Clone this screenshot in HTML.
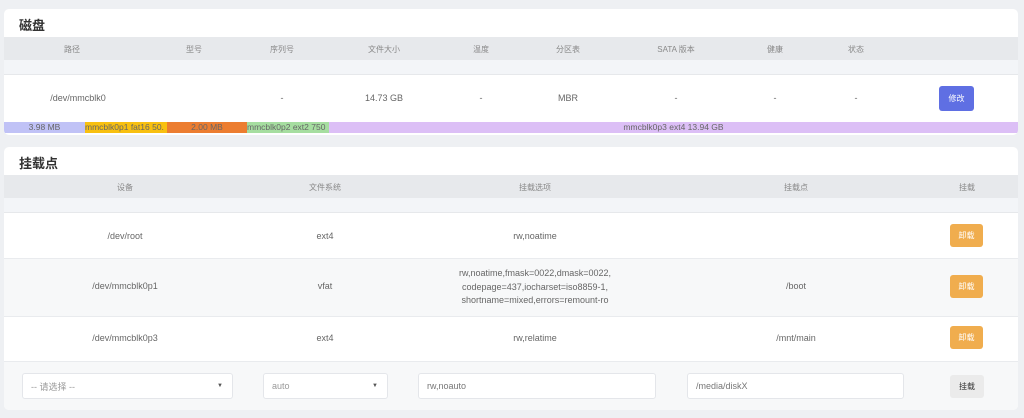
<!DOCTYPE html>
<html><head><meta charset="utf-8"><style>
*{margin:0;padding:0;box-sizing:border-box}
body{width:1024px;height:418px;background:#eef0f3;font-family:"Liberation Sans","Noto Sans CJK SC",sans-serif;color:#666;font-size:9px;position:relative;overflow:hidden}
.a{position:absolute}
.card{position:absolute;left:4px;width:1014px;background:#fff;border-radius:5px;overflow:hidden}
.t{position:absolute;transform:translateX(-50%);white-space:nowrap}
.h{color:#888;font-size:8px}
.title{position:absolute;left:15px;font-size:13px;font-weight:bold;color:#333}
.btn{position:absolute;border-radius:3px;color:#fff;font-size:8px;display:flex;align-items:center;justify-content:center}
.inp{position:absolute;background:#fff;border:1px solid #e4e6ea;border-radius:3px;height:26px;font-size:9px;color:#999;padding-left:8px;display:flex;align-items:center}
.seg{position:absolute;top:113px;height:11px;font-size:8.5px;line-height:11px;overflow:hidden;white-space:nowrap}
</style></head><body>
<div class="card" style="top:9px;height:126px">
 <div class="title" style="top:6px">磁盘</div>
 <div class="a" style="top:28px;left:0;width:100%;height:23px;background:#e7e9ec"></div>
 <div class="a" style="top:51px;left:0;width:100%;height:15px;background:#f3f5f8;border-bottom:1px solid #e6e8eb"></div>
 <div class="h t" style="top:35px;left:68px">路径</div>
 <div class="h t" style="top:35px;left:190px">型号</div>
 <div class="h t" style="top:35px;left:278px">序列号</div>
 <div class="h t" style="top:35px;left:380px">文件大小</div>
 <div class="h t" style="top:35px;left:477px">温度</div>
 <div class="h t" style="top:35px;left:564px">分区表</div>
 <div class="h t" style="top:35px;left:672px">SATA 版本</div>
 <div class="h t" style="top:35px;left:771px">健康</div>
 <div class="h t" style="top:35px;left:852px">状态</div>
 <div class="t" style="top:84px;left:74px">/dev/mmcblk0</div>
 <div class="t" style="top:84px;left:278px">-</div>
 <div class="t" style="top:84px;left:380px">14.73 GB</div>
 <div class="t" style="top:84px;left:477px">-</div>
 <div class="t" style="top:84px;left:564px">MBR</div>
 <div class="t" style="top:84px;left:672px">-</div>
 <div class="t" style="top:84px;left:771px">-</div>
 <div class="t" style="top:84px;left:852px">-</div>
 <div class="btn" style="top:77px;left:935px;width:35px;height:25px;background:#5f6fe3">修改</div>
 <div class="seg" style="left:0;width:81px;background:#c0c2f6;text-align:center">3.98 MB</div>
 <div class="seg" style="left:81px;width:82px;background:#f8c010">mmcblk0p1 fat16 50.</div>
 <div class="seg" style="left:163px;width:80px;background:#ec7d30;text-align:center">2.00 MB</div>
 <div class="seg" style="left:243px;width:82px;background:#a6dea0">mmcblk0p2 ext2 750</div>
 <div class="seg" style="left:325px;width:689px;background:#dcbff6;text-align:center">mmcblk0p3 ext4 13.94 GB</div>
</div>
<div class="card" style="top:147px;height:263px">
 <div class="title" style="top:6px">挂载点</div>
 <div class="a" style="top:28px;left:0;width:100%;height:23px;background:#e7e9ec"></div>
 <div class="a" style="top:51px;left:0;width:100%;height:15px;background:#f3f5f8;border-bottom:1px solid #e6e8eb"></div>
 <div class="a" style="top:111px;left:0;width:100%;height:59px;background:#f7f8f9;border-top:1px solid #e9ebee;border-bottom:1px solid #e9ebee"></div>
 <div class="a" style="top:214px;left:0;width:100%;height:49px;background:#f7f8f9;border-top:1px solid #e9ebee"></div>
 <div class="h t" style="top:35px;left:121px">设备</div>
 <div class="h t" style="top:35px;left:321px">文件系统</div>
 <div class="h t" style="top:35px;left:531px">挂载选项</div>
 <div class="h t" style="top:35px;left:792px">挂载点</div>
 <div class="h t" style="top:35px;left:963px">挂载</div>
 <div class="t" style="top:84px;left:121px">/dev/root</div>
 <div class="t" style="top:84px;left:321px">ext4</div>
 <div class="t" style="top:84px;left:531px">rw,noatime</div>
 <div class="btn" style="top:77px;left:946px;width:33px;height:23px;background:#f0ad4e">卸载</div>
 <div class="t" style="top:134px;left:121px">/dev/mmcblk0p1</div>
 <div class="t" style="top:134px;left:321px">vfat</div>
 <div class="t" style="top:120px;left:531px;text-align:center;line-height:13.7px">rw,noatime,fmask=0022,dmask=0022,<br>codepage=437,iocharset=iso8859-1,<br>shortname=mixed,errors=remount-ro</div>
 <div class="t" style="top:134px;left:792px">/boot</div>
 <div class="btn" style="top:128px;left:946px;width:33px;height:23px;background:#f0ad4e">卸载</div>
 <div class="t" style="top:186px;left:121px">/dev/mmcblk0p3</div>
 <div class="t" style="top:186px;left:321px">ext4</div>
 <div class="t" style="top:186px;left:531px">rw,relatime</div>
 <div class="t" style="top:186px;left:792px">/mnt/main</div>
 <div class="btn" style="top:179px;left:946px;width:33px;height:23px;background:#f0ad4e">卸载</div>
 <div class="inp" style="top:226px;left:18px;width:211px">-- 请选择 --<span style="position:absolute;right:9px;font-size:6px;color:#555">▼</span></div>
 <div class="inp" style="top:226px;left:259px;width:125px">auto<span style="position:absolute;right:9px;font-size:6px;color:#555">▼</span></div>
 <div class="inp" style="top:226px;left:414px;width:238px;color:#777">rw,noauto</div>
 <div class="inp" style="top:226px;left:683px;width:217px;color:#777">/media/diskX</div>
 <div class="btn" style="top:228px;left:946px;width:34px;height:23px;background:#ebebeb;color:#333">挂载</div>
</div>
</body></html>
